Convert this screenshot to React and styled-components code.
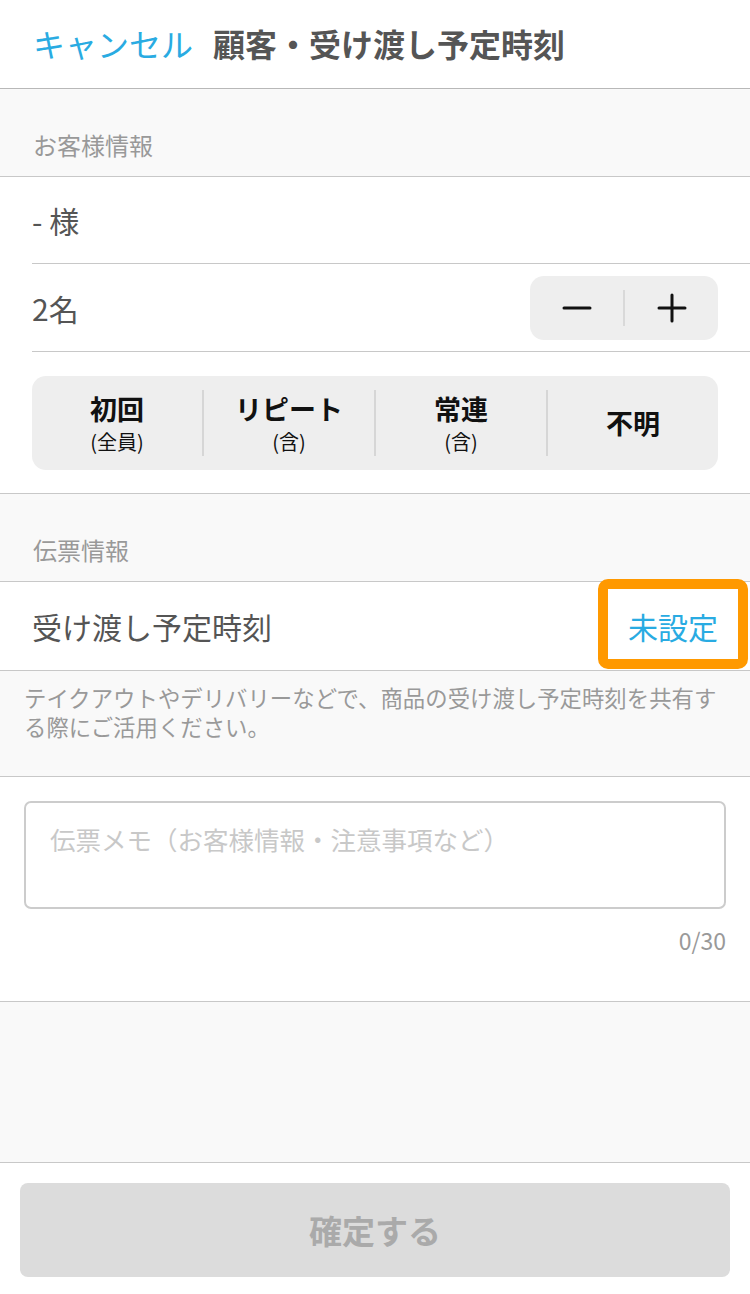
import React from 'react';
import styled, { createGlobalStyle } from 'styled-components';

const GlobalStyle = createGlobalStyle`
  * {
    box-sizing: border-box;
  }
  html, body {
    margin: 0;
    padding: 0;
    background: #fff;
    font-family: "Noto Sans CJK JP", "Noto Sans", sans-serif;
  }
`;

const blue = '#29abe2';
const line = '#c8c8c8';

const Page = styled.div`
  width: 750px;
  height: 1294px;
  display: flex;
  flex-direction: column;
  background: #f9f9f9;
`;

const Header = styled.header`
  height: 89px;
  flex-shrink: 0;
  display: flex;
  align-items: center;
  gap: 20px;
  padding: 0 33px 3px;
  background: #fff;
  border-bottom: 1px solid #b8b8b8;
`;

const CancelLink = styled.span`
  font-size: 32px;
  color: ${blue};
`;

const Title = styled.h1`
  margin: 0;
  font-size: 32px;
  font-weight: 700;
  color: #555;
`;

const SectionLabel = styled.div`
  height: 88px;
  flex-shrink: 0;
  display: flex;
  align-items: flex-end;
  padding: 0 33px 14px;
  font-size: 24px;
  color: #999;
  border-bottom: 1px solid ${line};
`;

const Block = styled.div`
  background: #fff;
  flex-shrink: 0;
  border-bottom: 1px solid ${line};
`;

const Row = styled.div`
  height: ${p => p.$h || 88}px;
  display: flex;
  align-items: center;
  justify-content: space-between;
  margin-left: 32px;
  padding-right: 32px;
  border-bottom: ${p => (p.$last ? 'none' : `1px solid ${line}`)};
  position: relative;
`;

const RowText = styled.span`
  font-size: 30px;
  color: #555;
`;

const Stepper = styled.div`
  width: 188px;
  height: 64px;
  display: flex;
  align-items: center;
  background: #eee;
  border-radius: 14px;
`;

const StepButton = styled.button`
  flex: 1;
  height: 100%;
  border: none;
  background: none;
  display: flex;
  align-items: center;
  justify-content: center;
  padding: 0;
`;

const StepDivider = styled.div`
  width: 2px;
  height: 36px;
  background: #d9d9d9;
`;

const SegmentWrap = styled.div`
  padding: 24px 32px 23px;
`;

const Segments = styled.div`
  height: 94px;
  display: flex;
  align-items: center;
  background: #eee;
  border-radius: 14px;
`;

const Segment = styled.div`
  flex: 1;
  height: 66px;
  display: flex;
  flex-direction: column;
  align-items: center;
  justify-content: center;
  border-left: ${p => (p.$first ? 'none' : '2px solid #d6d6d6')};
  color: #111;
`;

const SegMain = styled.span`
  font-size: 27px;
  font-weight: 700;
  line-height: 38px;
`;

const SegSub = styled.span`
  font-size: 20px;
  line-height: 28px;
`;

const ValueLink = styled.span`
  font-size: 30px;
  color: ${blue};
`;

const Highlight = styled.div`
  position: absolute;
  top: -3px;
  right: 2px;
  width: 150px;
  height: 90px;
  border: 10px solid #ff9900;
  border-radius: 10px;
  pointer-events: none;
`;

const Note = styled.p`
  margin: 0;
  flex-shrink: 0;
  padding: 12px 24px 35px;
  font-size: 22.4px;
  line-height: 29px;
  color: #999;
  border-bottom: 1px solid ${line};
`;

const MemoBlock = styled.div`
  flex-shrink: 0;
  height: 225px;
  padding: 24px 24px 0;
  background: #fff;
  border-bottom: 1px solid ${line};
`;

const Memo = styled.textarea`
  display: block;
  width: 100%;
  height: 108px;
  resize: none;
  padding: 18px 24px;
  border: 2px solid #ccc;
  border-radius: 7px;
  font-family: inherit;
  font-size: 25.5px;
  line-height: 36px;
  color: #555;
  outline: none;
  &::placeholder {
    color: #c8c8c8;
  }
`;

const Counter = styled.div`
  margin-top: 16px;
  text-align: right;
  font-size: 23px;
  line-height: 30px;
  color: #999;
`;

const Filler = styled.div`
  flex: 1;
  border-bottom: 1px solid ${line};
`;

const Footer = styled.footer`
  flex-shrink: 0;
  height: 131px;
  padding: 20px 20px 17px;
  background: #fff;
`;

const ConfirmButton = styled.button`
  width: 100%;
  height: 94px;
  border: none;
  border-radius: 8px;
  background: #dcdcdc;
  color: #aaa;
  font-family: inherit;
  font-size: 33px;
  font-weight: 700;
`;

const MinusIcon = () => (
  <svg width="30" height="30" viewBox="0 0 30 30">
    <path d="M2 15h26" stroke="#111" strokeWidth="3" strokeLinecap="round" />
  </svg>
);

const PlusIcon = () => (
  <svg width="30" height="30" viewBox="0 0 30 30">
    <path d="M2 15h26M15 2v26" stroke="#111" strokeWidth="3" strokeLinecap="round" />
  </svg>
);

const visitTypes = [
  { main: '初回', sub: '(全員)' },
  { main: 'リピート', sub: '(含)' },
  { main: '常連', sub: '(含)' },
  { main: '不明' },
];

const App = () => {
  const [count, setCount] = React.useState(2);
  const [memo, setMemo] = React.useState('');

  return (
    <Page>
      <GlobalStyle />
      <Header>
        <CancelLink>キャンセル</CancelLink>
        <Title>顧客・受け渡し予定時刻</Title>
      </Header>

      <SectionLabel>お客様情報</SectionLabel>
      <Block>
        <Row $h={87}>
          <RowText>- 様</RowText>
        </Row>
        <Row>
          <RowText>{count}名</RowText>
          <Stepper>
            <StepButton onClick={() => setCount(c => Math.max(1, c - 1))}><MinusIcon /></StepButton>
            <StepDivider />
            <StepButton onClick={() => setCount(c => c + 1)}><PlusIcon /></StepButton>
          </Stepper>
        </Row>
        <SegmentWrap>
          <Segments>
            {visitTypes.map((item, idx) => (
              <Segment key={idx} $first={idx === 0}>
                <SegMain>{item.main}</SegMain>
                {item.sub && <SegSub>{item.sub}</SegSub>}
              </Segment>
            ))}
          </Segments>
        </SegmentWrap>
      </Block>

      <SectionLabel>伝票情報</SectionLabel>
      <Block>
        <Row $last>
          <RowText>受け渡し予定時刻</RowText>
          <ValueLink>未設定</ValueLink>
          <Highlight />
        </Row>
      </Block>
      <Note>テイクアウトやデリバリーなどで、商品の受け渡し予定時刻を共有する際にご活用ください。</Note>

      <MemoBlock>
        <Memo
          value={memo}
          maxLength={30}
          onChange={e => setMemo(e.target.value)}
          placeholder="伝票メモ（お客様情報・注意事項など）"
        />
        <Counter>{memo.length}/30</Counter>
      </MemoBlock>

      <Filler />
      <Footer>
        <ConfirmButton disabled>確定する</ConfirmButton>
      </Footer>
    </Page>
  );
};

export default App;
